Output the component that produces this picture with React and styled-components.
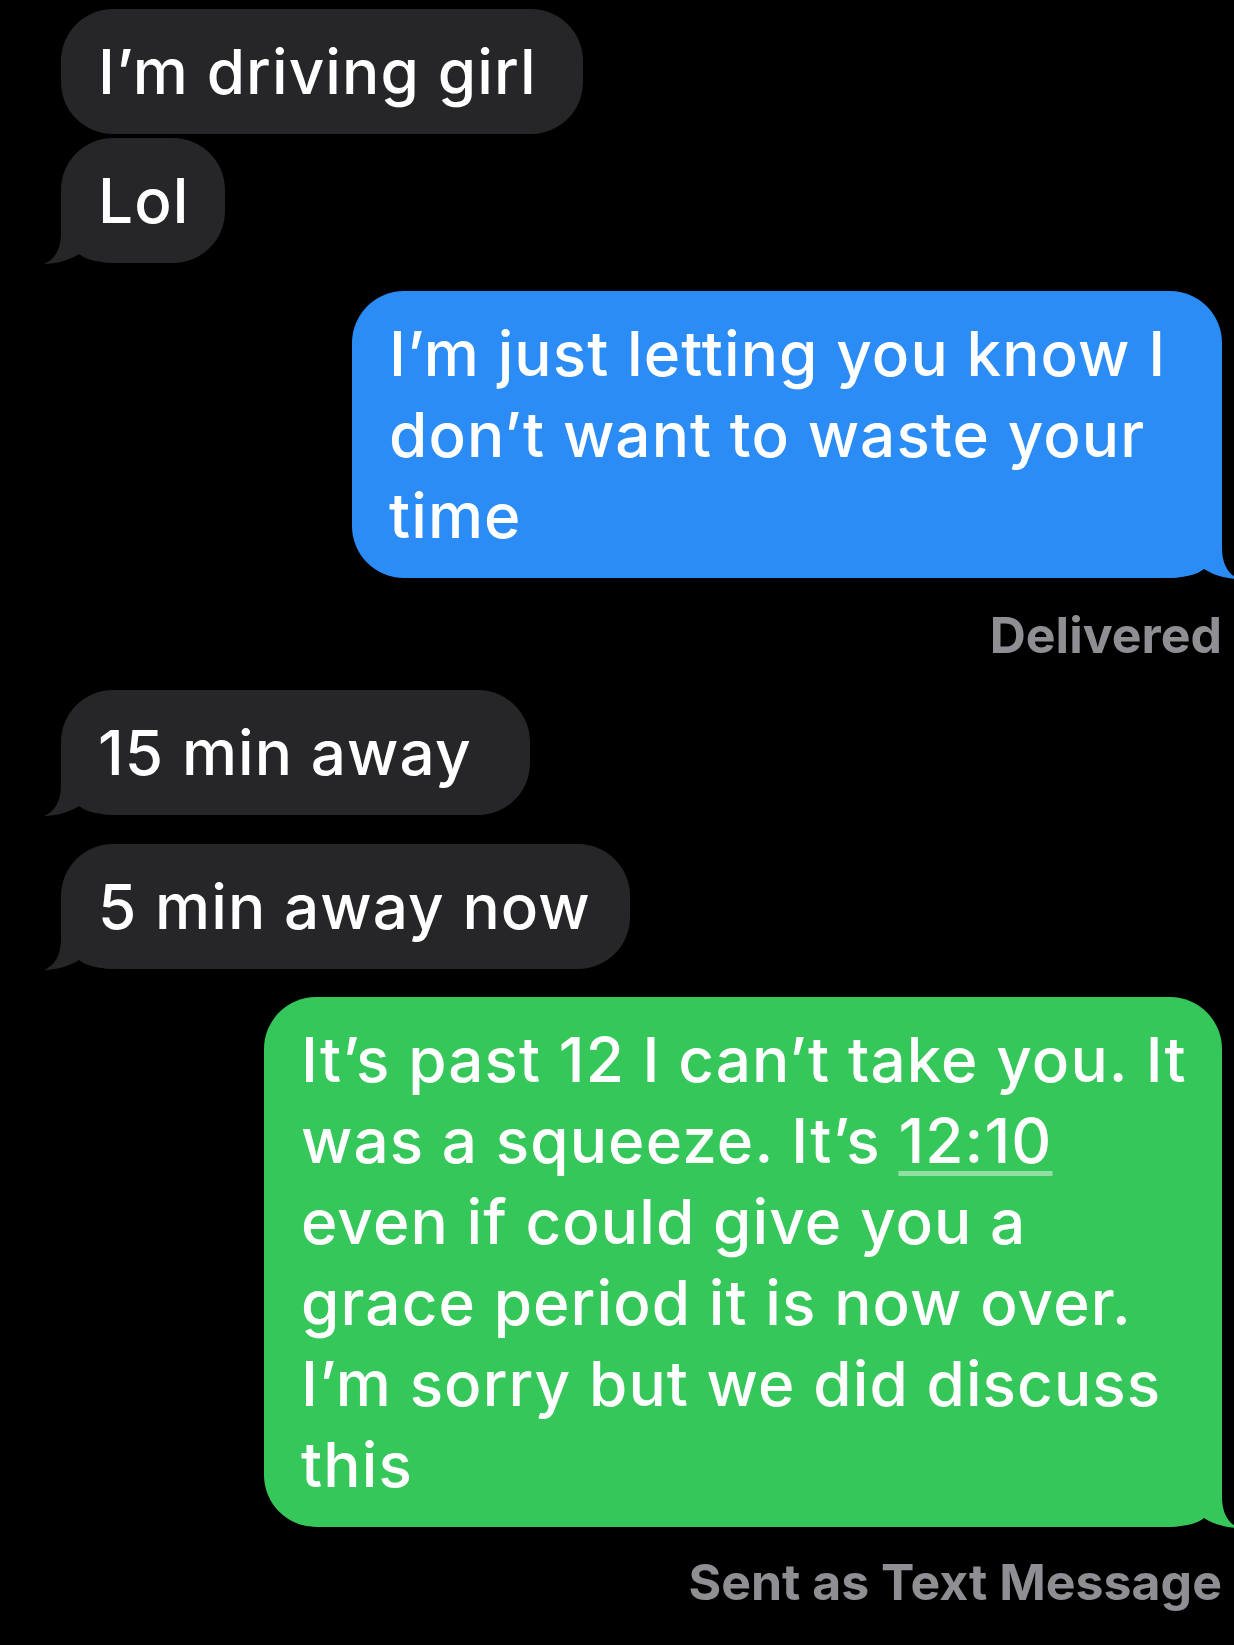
import styled, { createGlobalStyle } from 'styled-components';

const GlobalStyle = createGlobalStyle`
  html, body {
    margin: 0;
    padding: 0;
    background: #000;
  }
  body {
    font-family: Inter, "Noto Sans", sans-serif;
  }
`;

const colors = {
  in: '#262628',
  blue: '#2b8cf6',
  green: '#35c759',
};

const Thread = styled.div`
  display: flex;
  flex-direction: column;
  width: 1234px;
  min-height: 1645px;
  box-sizing: border-box;
  padding: 9px 12px 0 61px;
  background: #000;
  overflow: hidden;
`;

const Group = styled.div`
  display: flex;
  flex-direction: column;
  align-items: ${props => props.$out ? 'flex-end' : 'flex-start'};
  gap: ${props => props.$gap || 0}px;
  margin-top: ${props => props.$top || 0}px;
`;

const Bubble = styled.div`
  position: relative;
  box-sizing: border-box;
  width: ${props => props.$w}px;
  padding: 22px 20px 22px 37px;
  border-radius: 52px;
  background: ${props => colors[props.$kind]};
  color: #fff;
  font-size: 62px;
  font-weight: 500;
  line-height: 81px;
  letter-spacing: 1.1px;
  white-space: nowrap;
`;

const Text = styled.span`
  position: relative;
  display: block;
`;

const TailSvg = styled.svg`
  position: absolute;
  bottom: -1px;
  width: 80px;
  height: 70px;
  fill: ${props => colors[props.$kind]};
  ${props => props.$side === 'right'
    ? 'right: -17px; transform: scaleX(-1);'
    : 'left: -17px;'}
`;

const Underlined = styled.span`
  text-decoration: underline;
  text-decoration-color: rgba(255, 255, 255, 0.45);
  text-decoration-thickness: 5px;
  text-underline-offset: 8px;
`;

const Status = styled.div`
  margin-top: ${props => props.$top}px;
  font-weight: 700;
  font-size: 50px;
  line-height: 60px;
  color: #8e8e93;
`;

const Tail = ({ kind, side }) => (
  <TailSvg $kind={kind} $side={side} viewBox="0 0 80 70">
    <path d="M17 9 L17 39 C17 56 10 66 0 70 C12 70 26 66 35 60 C42 66 55 69 77 69 L77 9 Z" />
  </TailSvg>
);

const Message = ({ kind = 'in', w, tail, children }) => (
  <Bubble $kind={kind} $w={w}>
    {tail && <Tail kind={kind} side={kind === 'in' ? 'left' : 'right'} />}
    <Text>{children}</Text>
  </Bubble>
);

export default function App() {
  return (
    <>
      <GlobalStyle />
      <Thread>
        <Group $gap={4}>
          <Message w={522}>I’m driving girl</Message>
          <Message w={164} tail>Lol</Message>
        </Group>

        <Group $out $top={28}>
          <Message kind="blue" w={870} tail>
            I’m just letting you know I<br />
            don’t want to waste your<br />
            time
          </Message>
          <Status $top={27}>Delivered</Status>
        </Group>

        <Group $top={25} $gap={29}>
          <Message w={469} tail>15 min away</Message>
          <Message w={569} tail>5 min away now</Message>
        </Group>

        <Group $out $top={28}>
          <Message kind="green" w={958} tail>
            It’s past 12 I can’t take you. It<br />
            was a squeeze. It’s <Underlined>12:10</Underlined><br />
            even if could give you a<br />
            grace period it is now over.<br />
            I’m sorry but we did discuss<br />
            this
          </Message>
          <Status $top={25}>Sent as Text Message</Status>
        </Group>
      </Thread>
    </>
  );
}
